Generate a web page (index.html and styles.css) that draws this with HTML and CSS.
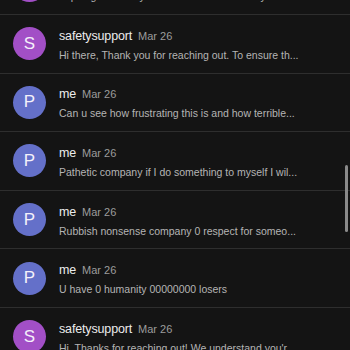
FILE: index.html
```html
<!DOCTYPE html>
<html>
<head>
<meta charset="utf-8">
<link rel="stylesheet" href="styles.css">
</head>
<body>
<div class="list">
  <div class="row">
    <div class="avatar s">S</div>
    <div class="text">
      <div class="head"><span class="name">safetysupport</span><span class="date">Mar 26</span></div>
      <div class="msg">I apologise for any inconvenience caused by this...</div>
    </div>
  </div>
  <div class="row">
    <div class="avatar s">S</div>
    <div class="text">
      <div class="head"><span class="name">safetysupport</span><span class="date">Mar 26</span></div>
      <div class="msg">Hi there, Thank you for reaching out. To ensure th...</div>
    </div>
  </div>
  <div class="row">
    <div class="avatar p">P</div>
    <div class="text">
      <div class="head"><span class="name">me</span><span class="date">Mar 26</span></div>
      <div class="msg">Can u see how frustrating this is and how terrible...</div>
    </div>
  </div>
  <div class="row">
    <div class="avatar p">P</div>
    <div class="text">
      <div class="head"><span class="name">me</span><span class="date">Mar 26</span></div>
      <div class="msg">Pathetic company if I do something to myself I wil...</div>
    </div>
  </div>
  <div class="row">
    <div class="avatar p">P</div>
    <div class="text">
      <div class="head"><span class="name">me</span><span class="date">Mar 26</span></div>
      <div class="msg">Rubbish nonsense company 0 respect for someo...</div>
    </div>
  </div>
  <div class="row">
    <div class="avatar p">P</div>
    <div class="text">
      <div class="head"><span class="name">me</span><span class="date">Mar 26</span></div>
      <div class="msg">U have 0 humanity 00000000 losers</div>
    </div>
  </div>
  <div class="row">
    <div class="avatar s">S</div>
    <div class="text">
      <div class="head"><span class="name">safetysupport</span><span class="date">Mar 26</span></div>
      <div class="msg">Hi, Thanks for reaching out! We understand you'r...</div>
    </div>
  </div>
</div>
<div class="scrollbar"></div>
</body>
</html>
```

FILE: styles.css
```css
html, body {
  margin: 0;
  padding: 0;
  background: #141414;
  width: 350px;
  height: 350px;
  overflow: hidden;
  font-family: "Liberation Sans", Arial, sans-serif;
}
.list {
  margin-top: -43.6px;
  display: flex;
  flex-direction: column;
}
.row {
  display: flex;
  align-items: center;
  gap: 13px;
  padding: 0 13px;
  height: 57.6px;
  border-bottom: 1px solid #2e2e2e;
  flex-shrink: 0;
}
.avatar {
  width: 33px;
  height: 33px;
  border-radius: 50%;
  display: flex;
  align-items: center;
  justify-content: center;
  color: #f4f0fa;
  font-size: 17px;
  flex-shrink: 0;
}
.avatar.s { background: #a24fc6; }
.avatar.p { background: #6470c9; }
.text {
  display: flex;
  flex-direction: column;
  gap: 4px;
  padding-top: 2px;
}
.head {
  display: flex;
  align-items: baseline;
  gap: 6px;
  line-height: 16px;
}
.name {
  color: #ececec;
  font-size: 12.5px;
  letter-spacing: -0.15px;
}
.date {
  color: #9c9c9c;
  font-size: 11px;
}
.msg {
  color: #b4b4b4;
  font-size: 10.5px;
  line-height: 14px;
  white-space: nowrap;
}
.scrollbar {
  position: absolute;
  left: 345px;
  top: 165px;
  width: 3px;
  height: 67px;
  border-radius: 2px;
  background: #8a8a8a;
}
```
